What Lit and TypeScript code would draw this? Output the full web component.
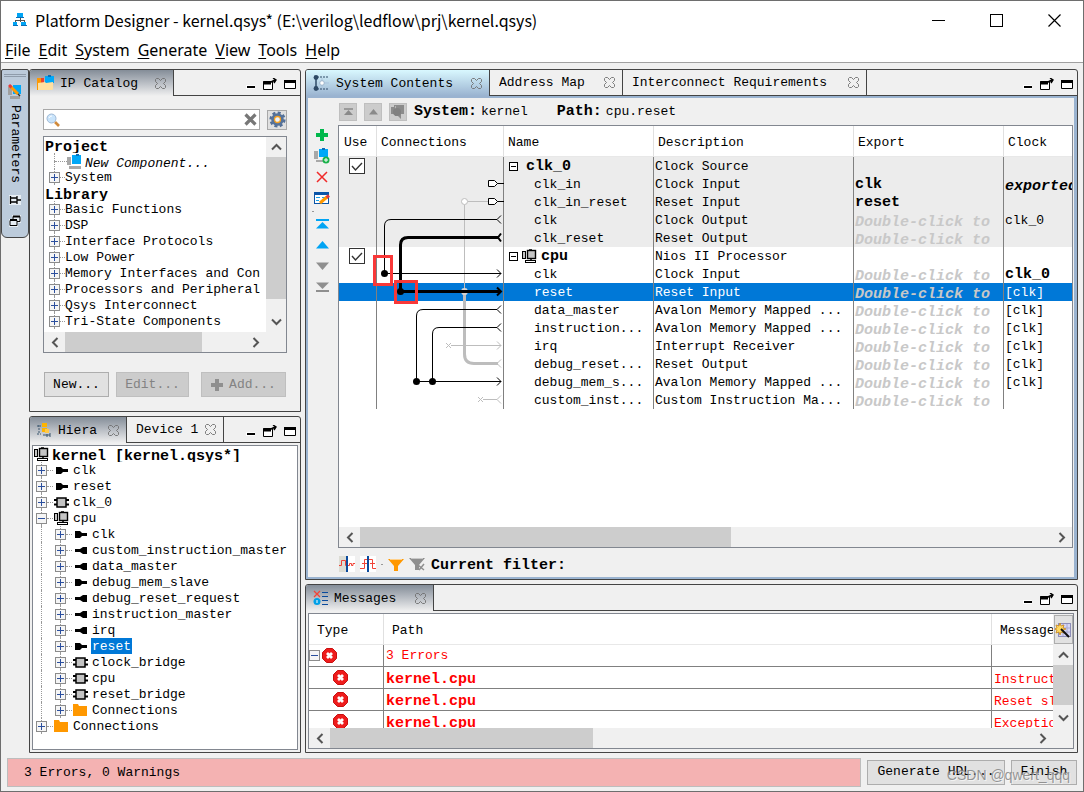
import { LitElement, html, css, svg, nothing, TemplateResult } from "lit";
import { customElement, state } from "lit/decorators.js";
import { classMap } from "lit/directives/class-map.js";

type Port = {
  name: string;
  desc: string;
  exp?: string;
  hint?: boolean;
  clock?: string;
  clockStyle?: string;
  root?: "plain" | "cpu";
  shaded?: boolean;
};

const HINT = "Double-click to";

const PORTS: Port[] = [
  { name: "clk_0", desc: "Clock Source", root: "plain", shaded: true },
  { name: "clk_in", desc: "Clock Input", exp: "clk", clock: "exported", clockStyle: "hint dark", shaded: true },
  { name: "clk_in_reset", desc: "Reset Input", exp: "reset", shaded: true },
  { name: "clk", desc: "Clock Output", hint: true, clock: "clk_0", shaded: true },
  { name: "clk_reset", desc: "Reset Output", hint: true, shaded: true },
  { name: "cpu", desc: "Nios II Processor", root: "cpu" },
  { name: "clk", desc: "Clock Input", hint: true, clock: "clk_0", clockStyle: "bold" },
  { name: "reset", desc: "Reset Input", hint: true, clock: "[clk]" },
  { name: "data_master", desc: "Avalon Memory Mapped ...", hint: true, clock: "[clk]" },
  { name: "instruction...", desc: "Avalon Memory Mapped ...", hint: true, clock: "[clk]" },
  { name: "irq", desc: "Interrupt Receiver", hint: true, clock: "[clk]" },
  { name: "debug_reset...", desc: "Reset Output", hint: true, clock: "[clk]" },
  { name: "debug_mem_s...", desc: "Avalon Memory Mapped ...", hint: true, clock: "[clk]" },
  { name: "custom_inst...", desc: "Custom Instruction Ma...", hint: true },
];

const LIBRARY = [
  "Basic Functions",
  "DSP",
  "Interface Protocols",
  "Low Power",
  "Memory Interfaces and Con",
  "Processors and Peripheral",
  "Qsys Interconnect",
  "Tri-State Components",
];

type Node = { label: string; icon: string; deep?: boolean; open?: boolean };
const HIERARCHY: Node[] = [
  { label: "clk", icon: "in" },
  { label: "reset", icon: "in" },
  { label: "clk_0", icon: "chip" },
  { label: "cpu", icon: "cpu", open: true },
  { label: "clk", icon: "in", deep: true },
  { label: "custom_instruction_master", icon: "out", deep: true },
  { label: "data_master", icon: "out", deep: true },
  { label: "debug_mem_slave", icon: "in", deep: true },
  { label: "debug_reset_request", icon: "out", deep: true },
  { label: "instruction_master", icon: "out", deep: true },
  { label: "irq", icon: "out", deep: true },
  { label: "reset", icon: "in", deep: true },
  { label: "clock_bridge", icon: "chip", deep: true },
  { label: "cpu", icon: "chip", deep: true },
  { label: "reset_bridge", icon: "chip", deep: true },
  { label: "Connections", icon: "folder", deep: true },
  { label: "Connections", icon: "folder" },
];

const ic = (w: number, h: number, body: unknown) =>
  html`<svg class="ic" width=${w} height=${h} viewBox="0 0 ${w} ${h}" aria-hidden="true">${body}</svg>`;

const icons: Record<string, TemplateResult> = {
  app: ic(14, 14, svg`<g shape-rendering="crispEdges"><path d="M7 5v4M2.500 10V7.500h9V10" fill="none" stroke="#555"/><rect x="4" y="0" width="6" height="4" fill="#00a4f4"/><rect x="3" y="4" width="8" height="1" fill="#0a6fb8"/><rect x="0" y="9" width="4" height="3" fill="#00a4f4"/><rect x="0" y="12" width="5" height="1" fill="#0a6fb8"/><rect x="8" y="9" width="5" height="3" fill="#00a4f4"/><rect x="8" y="12" width="6" height="1" fill="#0a6fb8"/></g>`),
  catalog: ic(17, 16, svg`<rect x="2" y="3" width="5" height="6" fill="#e8432e"/><rect x="8" y="1" width="9" height="7" fill="#00a8f8"/><path d="M11 0h3v2h-3z" fill="#0a6fb8"/><path d="M0 3h4v12H0z" fill="#ff9800"/><path d="M1 8l7-1 1 1 7-1v7l-1 1H1z" fill="#ffe0a0"/>`),
  param: ic(14, 16, svg`<rect x="5" y="1" width="8" height="9" fill="#00a8f8"/><path d="M0 3h4v8H0zM2 12h10v3H2z" fill="#a0a0a0"/><path d="M2 2l8 8" stroke="#ff9800" stroke-width="3"/><path d="M1 1l2.500 2.500" stroke="#e83a3a" stroke-width="3"/><path d="M10 10l2 2" stroke="#333" stroke-width="1.500"/>`),
  pin: ic(12, 10, svg`<path d="M0 0h12v10H0z" fill="#e6edf4"/><path d="M1.500 1v8M1 3h7M1 7h7M8 1v8M8 5h4" fill="none" stroke="#000" stroke-width="1.300"/>`),
  restore: ic(12, 12, svg`<path d="M3 0h9v8H9v4H0V4h3z" fill="#e6edf4"/><path d="M4 4V1.500h7v5H8" fill="none" stroke="#000"/><path d="M1 5.500h7v5H1z" fill="none" stroke="#000"/><path d="M1 5h7M4 1.500h7" stroke="#000" stroke-width="2"/>`),
  hier: ic(15, 15, svg`<path d="M2 2v9M0 3h4M0 11h4" stroke="#38546c" fill="none" stroke-dasharray="2 1"/><rect x="5" y="0" width="5" height="4" fill="#ffb400"/><rect x="5" y="5" width="5" height="4" fill="#ffb400"/><rect x="8" y="6" width="4" height="4" fill="#ffc94a"/><path d="M6 12h7M13 10v4M10 11v3" stroke="#38546c"/>`),
  sys: ic(17, 16, svg`<g fill="none"><path d="M3 2v12" stroke="#2e4a66" stroke-width="1.500"/><path d="M4 2h12M4 14h12" stroke="#2e4a66" stroke-dasharray="2 1"/><path d="M9 3v10M6 8h10" stroke="#a9c3dc"/></g><circle cx="3" cy="2.500" r="2.400" fill="#2e4a66"/><circle cx="3" cy="13.500" r="2.400" fill="#2e4a66"/><circle cx="9" cy="8" r="2.300" fill="#fff" stroke="#9db5cc"/>`),
  msg: ic(15, 16, svg`<path d="M1 1l6 6M7 1L1 7" stroke="#f44336" stroke-width="1.300"/><circle cx="4" cy="11.500" r="3.500" fill="#00a0e8"/><path d="M4 10v3" stroke="#fff"/><path d="M9 2.500h6M9 6.500h6M9 10.500h6M9 14.500h6" stroke="#0a4a9c"/>`),
  close: ic(11, 11, svg`<path d="M.500 1.500l1-1h2l2 2 2-2h2l1 1v2l-2 2 2 2v2l-1 1h-2l-2-2-2 2h-2l-1-1v-2l2-2-2-2z" fill="none" stroke="#6e6e6e" stroke-width=".9"/>`),
  min: ic(9, 13, svg`<rect x="0" y="7" width="9" height="4" fill="#fff"/><rect x="1" y="8" width="8" height="2" fill="#000"/>`),
  pop: ic(15, 13, svg`<path d="M1.500 3.500h9v8h-9z" fill="#fff" stroke="#000"/><path d="M1 5h8" stroke="#000" stroke-width="3"/><path d="M8 4.500l5-2.500M11 0l3 2-2 3" fill="none" stroke="#000" stroke-width="1.400"/>`),
  max: ic(13, 13, svg`<path d="M.500 2.500h11v8H.500z" fill="#fff" stroke="#000"/><path d="M0 3.500h12" stroke="#000" stroke-width="3"/>`),
  search: ic(14, 14, svg`<path d="M9 9l4 4" stroke="#d08a3c" stroke-width="2.600"/><circle cx="5.500" cy="5.500" r="4.500" fill="#c9e4fb" stroke="#9fb8d4"/><path d="M3 5a3 3 0 0 1 3-2" stroke="#fff" fill="none"/>`),
  clear: ic(13, 13, svg`<path d="M1.500 1.500l10 10M11.500 1.500l-10 10" stroke="#777" stroke-width="3.200"/>`),
  gear: ic(17, 17, svg`<circle cx="8.500" cy="8.500" r="6.800" fill="none" stroke="#536f96" stroke-width="2.600" stroke-dasharray="3 2.340"/><circle cx="8.500" cy="8.500" r="4.600" fill="#dfe8f4" stroke="#56739b" stroke-width="3.400"/><circle cx="8.500" cy="8.500" r="3" fill="#eef4fb" stroke="#f5a021" stroke-width="1.300"/>`),
  comp: ic(15, 15, svg`<rect x="5" y="1" width="9" height="9" fill="#00a8f8"/><path d="M0 3h4v8H0zM2 12h12v3H2z" fill="#a8a8a8"/><path d="M9 0h3v2H9z" fill="#0a6fb8"/>`),
  compAdd: ic(16, 16, svg`<rect x="5" y="1" width="9" height="8" fill="#00a8f8"/><path d="M0 3h4v8H0zM2 12h8v2H2z" fill="#a8a8a8"/><path d="M8 0h3v2H8z" fill="#0a6fb8"/><circle cx="12" cy="12" r="3.500" fill="#19b24a"/><path d="M12 10v4M10 12h4" stroke="#fff"/>`),
  compGray: ic(16, 16, svg`<path d="M1 3h3V1h10v9h-3v5l-3-3H5v-2H1z" fill="#8b8b8b"/><path d="M5.500 2v6" stroke="#b4b4b4"/><circle cx="7" cy="8" r="4" fill="#808080"/>`),
  add: ic(12, 12, svg`<path d="M4 0h4v4h4v4H8v4H4V8H0V4h4z" fill="#00b84c"/>`),
  addGray: ic(12, 12, svg`<path d="M4 0h4v4h4v4H8v4H4V8H0V4h4z" fill="#8f8f8f"/>`),
  del: ic(12, 12, svg`<path d="M1 1l10 10M11 1L1 11" stroke="#f02a2a" stroke-width="1.500"/>`),
  edit: ic(16, 14, svg`<rect x=".500" y="1.500" width="14" height="11" fill="#fff" stroke="#0a55a8"/><path d="M0 2.500h15" stroke="#0a55a8" stroke-width="3"/><path d="M2 6.500h4M2 9.500h3M8 6.500h3" stroke="#18a0e8"/><path d="M6 12l7-6" stroke="#ff9800" stroke-width="3"/><path d="M12.500 6.500L15 4.500" stroke="#e83a3a" stroke-width="3"/>`),
  top: ic(13, 10, svg`<path d="M0 1h13" stroke="#00a4f4" stroke-width="2"/><path d="M6.500 3L13 9.500H0z" fill="#00a4f4"/>`),
  up: ic(13, 8, svg`<path d="M6.500 0L13 7.500H0z" fill="#00a4f4"/>`),
  down: ic(13, 8, svg`<path d="M6.500 8L13 .500H0z" fill="#8f8f8f"/>`),
  bottom: ic(13, 10, svg`<path d="M0 9h13" stroke="#8f8f8f" stroke-width="2"/><path d="M6.500 7L13 .500H0z" fill="#8f8f8f"/>`),
  topGray: ic(9, 8, svg`<path d="M0 1h9" stroke="#8a8a8a" stroke-width="1.500"/><path d="M4.500 2L9 7H0z" fill="#8a8a8a"/>`),
  upGray: ic(9, 6, svg`<path d="M4.500 0L9 5.500H0z" fill="#8a8a8a"/>`),
  in: ic(14, 9, svg`<path d="M1 1h5l2 2h5v3H8L6 8H1z" fill="#000"/>`),
  out: ic(14, 9, svg`<path d="M13 1H9L6 3H1v3h5l3 2h4z" fill="#000"/>`),
  chip: ic(15, 11, svg`<path d="M0 3h15M0 7.500h15" stroke="#000" stroke-width="2"/><rect x="3" y="1" width="9" height="9" fill="#c4c4c4" stroke="#000" stroke-width="1.500"/>`),
  cpu: ic(15, 14, svg`<g stroke="#000"><rect x=".500" y="2.500" width="3" height="7" fill="#c4c4c4"/><rect x="5.500" y="1.500" width="8" height="8" fill="#c4c4c4" stroke-width="1.400"/><path d="M9 10v2M7 0h3" fill="none" stroke-width="1.500"/><rect x="3.500" y="11.500" width="10" height="2" fill="#fff"/></g>`),
  folder: ic(15, 12, svg`<path d="M0 0h5l1 2h8v10H0z" fill="#ff9800"/>`),
  err: ic(15, 15, svg`<path d="M4.500.500h6l4 4v6l-4 4h-6l-4-4v-6z" fill="#ee1c1c" stroke="#c81010"/><path d="M5 5l5 5M10 5l-5 5" stroke="#fff" stroke-width="2.800"/>`),
  wave1: ic(16, 16, svg`<rect width="7" height="16" fill="#dcdcd4"/><rect x="7" width="9" height="16" fill="#fff"/><path d="M0 9.500h2.500v-5h4v5H9M9 9.500h1.500v-2h2v2h1.500v-2h2" fill="none" stroke="#f04438"/><path d="M8 0v16" stroke="#0a4a9c" stroke-width="2"/>`),
  wave2: ic(16, 16, svg`<rect width="16" height="16" fill="#fff"/><path d="M0 12.500h4.500v-9H7M9 3.500h3.500v9H16M2 7.500h5M10 7.500h5" fill="none" stroke="#f04438"/><path d="M8 0v16" stroke="#0a4a9c" stroke-width="2"/>`),
  funnel: ic(16, 13, svg`<path d="M0 1h16l-6 7v5H6V8z" fill="#ff9800"/><path d="M2 1.500h12" stroke="#ffd08a"/>`),
  funnelGray: ic(17, 14, svg`<path d="M0 1h16l-6 7v5H6V8z" fill="#8f8f8f"/><path d="M2 1.500h12" stroke="#c8c8c8"/><path d="M9 8l6 5M15 7l-5 6" stroke="#8f8f8f" stroke-width="1.500"/>`),
  wizard: ic(16, 16, svg`<rect x="3.500" y="1.500" width="12" height="13" fill="#d5d5f4" stroke="#8e8eb8"/><path d="M4 6h11M4 10h11M8 2v12M12 2v12" stroke="#a8a8d0"/><path d="M5 1l1 3 3-1-1 3 3 1-3 1 1 3-3-1-1 3-1-3-3 1 1-3-3-1 3-1-1-3 3 1z" fill="#ffd860" stroke="#c8881c" stroke-width=".8"/><path d="M6 7l8 8" stroke="#111" stroke-width="2"/>`),
  plus: ic(11, 11, svg`<rect x=".500" y=".500" width="10" height="10" fill="#f5f5f5" stroke="#8c8c8c"/><path d="M2 5.500h7M5.500 2v7" stroke="#2b4f9e"/>`),
  minus: ic(11, 11, svg`<rect x=".500" y=".500" width="10" height="10" fill="#f5f5f5" stroke="#8c8c8c"/><path d="M2 5.500h7" stroke="#2b4f9e"/>`),
  fold: ic(9, 9, svg`<rect x=".500" y=".500" width="8" height="8" fill="#fff" stroke="#000"/><path d="M2 4.500h5" stroke="#000"/>`),
  chevL: ic(8, 11, svg`<path d="M6.500 1L2 5.500 6.500 10" fill="none" stroke="#555" stroke-width="2"/>`),
  chevR: ic(8, 11, svg`<path d="M1.500 1L6 5.500 1.500 10" fill="none" stroke="#555" stroke-width="2"/>`),
  chevU: ic(11, 8, svg`<path d="M1 6.500L5.500 2 10 6.500" fill="none" stroke="#555" stroke-width="2"/>`),
  chevD: ic(11, 8, svg`<path d="M1 1.500L5.500 6 10 1.500" fill="none" stroke="#555" stroke-width="2"/>`),
};

/* Wiring between module ports, one lane per bus. */
const wiring = html`
  <svg class="wires" width="165" height="252" viewBox="339 157 165 252" aria-hidden="true">
    <g fill="none" stroke="#bdbdbd">
      <path d="M464.500 205V290M468 201.500H488" />
      <path d="M464.500 295V354Q464.500 363.500 474 363.500H498" stroke-width="3" />
      <path d="M451 345.500H501M446 343l5 5M451 343l-5 5M497 341.500l4 4-4 4" />
      <path d="M483 399.500H497M478 397l5 5M483 397l-5 5M501 395.500l-4 4 4 4M501 359.500l-4 4 4 4" />
      <circle cx="464.500" cy="201.500" r="3" fill="#fff" />
    </g>
    <g fill="none" stroke="#000">
      <path d="M497 183.500H504M497 201.500H504" />
      <path d="M488.500 180.500h6l3 3-3 3h-6zM488.500 198.500h6l3 3-3 3h-6z" fill="#fff" />
      <path d="M497 219.500H391Q384.500 219.500 384.500 226V273.500H501" />
      <path d="M501 215.500l-4 4 4 4M497 269.500l4 4-4 4" />
      <path d="M498 237.500H408Q400.500 237.500 400.500 245V291.500H501" stroke-width="3" />
      <path d="M501 233.500l-3 4 3 4M497 287.500l4 4-4 4" stroke-width="2" />
      <path d="M497 309.500H423Q416.500 309.500 416.500 316V381.500H501" />
      <path d="M497 327.500H439Q432.500 327.500 432.500 334V381.500" />
      <path d="M501 305.500l-4 4 4 4M501 323.500l-4 4 4 4M497 377.500l4 4-4 4" />
    </g>
    <path d="M461.500 290q0-2 3-2t3 2zM461.500 293q0 2 3 2t3-2z" fill="#d4d4d4" />
    <circle cx="384.500" cy="273.500" r="3.500" />
    <circle cx="400.500" cy="291.500" r="3.500" />
    <circle cx="416.500" cy="381.500" r="3.500" />
    <circle cx="432.500" cy="381.500" r="3.500" />
    <g fill="none" stroke="#f93838" stroke-width="3">
      <rect x="374.500" y="256.500" width="17" height="28" />
      <rect x="395.500" y="281.500" width="21" height="21" />
    </g>
  </svg>
`;

@customElement("app-root")
export class AppRoot extends LitElement {
  @state() private selected = 7;

  static styles = css`
    :host {
      display: block;
      color: #000;
      font: 13px/16px "Liberation Mono", monospace;
    }
    * { box-sizing: border-box; }
    button, input { font: inherit; color: inherit; }
    button { margin: 0; padding: 0; border: 0; background: none; white-space: nowrap; }
    svg { display: block; flex: none; }
    .bold { font-weight: bold; font-size: 15px; }
    .app {
      display: grid;
      grid-template-rows: 38px 24px minmax(0, 1fr) 38px;
      height: 100vh;
      min-height: 560px;
      background: #f0f0f0;
      border: 1px solid #6e6e6e;
      overflow: hidden;
    }
    .titlebar {
      display: flex;
      align-items: center;
      background: #fff;
      padding-left: 12px;
      font: 16px/22px "Noto Sans CJK SC", "Noto Sans", sans-serif;
    }
    .titlebar h1 { flex: 1; margin: 0 0 0 8px; font: inherit; }
    .sysbtn { width: 58px; height: 36px; display: grid; place-items: center; }
    .menubar {
      display: flex;
      gap: 8px;
      padding: 0 4px;
      background: #fff;
      border-bottom: 1px solid #a0a0a0;
      font: 16px/23px "Noto Sans", sans-serif;
    }
    .menubar u { text-underline-offset: 2px; }
    .body { display: flex; padding: 6px 5px 0 0; min-height: 0; }

    .dock {
      width: 28px;
      height: 169px;
      flex: none;
      display: flex;
      flex-direction: column;
      align-items: center;
      background: #bccbdb;
      border: 1px solid #444;
      border-radius: 2px 2px 6px 6px;
      padding-top: 4px;
    }
    .grip { width: 22px; height: 3px; border: 1px solid #8f9cab; border-width: 1px 0; margin-bottom: 7px; }
    .dock button { display: flex; flex-direction: column; align-items: center; gap: 5px; margin-bottom: 12px; }
    .dock .vertical { writing-mode: vertical-rl; }
    .dock .small { margin-bottom: 10px; }

    .left { flex: none; width: 272px; display: grid; grid-template-rows: 343fr 337fr; gap: 4px; }
    .right { flex: 1; min-width: 0; margin-left: 4px; display: grid; grid-template-rows: 511fr 169fr; gap: 4px; }
    .panel {
      display: flex;
      flex-direction: column;
      min-height: 0;
      min-width: 0;
      border: 1px solid #444;
      border-radius: 3px 3px 0 0;
      overflow: hidden;
    }
    .tabs { display: flex; height: 26px; flex: none; }
    .tab {
      display: flex;
      align-items: center;
      flex: none;
      padding: 0 7px 0 9px;
      border-right: 1px solid #444;
      border-bottom: 1px solid #444;
    }
    .tab .name { flex: 1; overflow: hidden; text-align: left; padding-top: 1px; }
    .tab .ic { margin-right: 6px; }
    .tab .x .ic { margin: 0; }
    .tab.active { border-bottom: 0; padding-left: 7px; background: linear-gradient(#848d98, #b4b9c0 45%, #f0f0f0); }
    .tab.focus { background: linear-gradient(#d9f8ff, #9ab3d0); }
    .w184 { width: 184px; } .w133 { width: 133px; } .w244 { width: 244px; }
    .w144 { width: 144px; } .w128 { width: 128px; } .w97 { width: 97px; }
    .rest {
      flex: 1;
      display: flex;
      align-items: center;
      justify-content: flex-end;
      gap: 7px;
      padding: 3px 3px 0 0;
      border-bottom: 1px solid #444;
    }

    .catalog { flex: 1; min-height: 0; display: flex; flex-direction: column; padding: 13px 13px 14px; }
    .searchrow { display: flex; align-items: center; justify-content: space-between; margin-bottom: 6px; }
    .field { display: flex; align-items: center; width: 217px; height: 21px; padding: 0 2px; background: #fff; border: 1px solid #a8a8a8; }
    .field input { flex: 1; min-width: 0; border: 0; outline: 0; padding: 0 4px; background: none; }
    .gear { width: 20px; height: 20px; border: 1px solid #a8a8a8; background: #e0e0e0; display: grid; place-items: center; }
    .scrollbox {
      flex: 1;
      min-height: 0;
      display: grid;
      grid-template: minmax(0, 1fr) 20px / minmax(0, 1fr) 20px;
      border: 1px solid #828790;
      background: #fff;
    }
    .view { overflow: hidden; }
    .vbar, .hbar { background: #f0f0f0; display: flex; align-items: center; }
    .vbar { flex-direction: column; }
    .vbar .track, .hbar .track { flex: 1; display: flex; align-self: stretch; min-height: 0; }
    .vbar .track { flex-direction: column; }
    .thumb { background: #cdcdcd; }
    .arrow { width: 21px; height: 20px; flex: none; display: grid; place-items: center; }
    .corner { background: #f0f0f0; }

    ul { list-style: none; margin: 0; padding: 0; }
    .row { display: flex; align-items: center; height: 16px; overflow: hidden; white-space: pre; }
    .row .bold, .row i { line-height: 21px; height: 16px; overflow: hidden; }
    .cat .row { padding-left: 5px; }
    .cat .head { padding-left: 1px; }
    .text { padding-top: 2px; }
    .dots { width: 5px; border-top: 1px dotted #999; }
    .stem { align-self: stretch; width: 11px; display: flex; flex-direction: column; align-items: center; flex: none; }
    .stem::before, .stem::after { content: ""; flex: 1; border-left: 1px dotted #999; }
    .dots.long { width: 12px; margin-left: -5px; }
    .row i { padding-left: 3px; }

    .actions { display: flex; margin: 19px 0 0 1px; gap: 7px; }
    .btn { height: 25px; border: 1px solid #adadad; background: #e1e1e1; display: flex; align-items: center; justify-content: center; gap: 6px; }
    .btn:disabled { background: #ccc; border-color: #bfbfbf; color: #838383; }
    .bnew { width: 65px; } .bedit { width: 73px; } .badd { width: 85px; margin-left: 5px; }

    .hbox { flex: 1; min-height: 0; margin: 2px; border: 1px solid #828790; background: #fff; overflow: hidden; }
    .hbox .row { padding-left: 3px; }
    .hbox .row.top { padding-left: 1px; gap: 3px; }
    .hbox .row.deep { padding-left: 8px; }
    .hbox .dots { width: 6px; margin-right: 1px; }
    .slot { width: 15px; flex: none; display: grid; place-items: center; }
    .lab { margin-left: 3px; padding: 2px 1px 0; line-height: 16px; }
    .trunk { align-self: stretch; border-left: 1px dotted #999; margin-right: 13px; }
    .lab.sel { background: #0078d7; color: #fff; }

    .main { flex: 1; min-height: 0; display: grid; grid-template: 27px minmax(0, 1fr) 29px / 30px minmax(0, 1fr); border: 2px solid #9ab3d0; border-right-width: 3px; padding-right: 1px; }
    .pathbar { grid-column: 1 / -1; display: flex; align-items: center; gap: 7px; padding-left: 31px; }
    .sq { width: 18px; height: 18px; background: #ccc; border: 1px solid #bfbfbf; display: grid; place-items: center; }
    .pathbar .bold { margin-right: -3px; }
    .pathbar .second { margin-left: 22px; }
    .tools { display: flex; flex-direction: column; align-items: center; padding-right: 2px; }
    .tools button { height: 20px; display: grid; place-items: center; margin-bottom: 1px; }
    .tools .sep { width: 2px; height: 1px; background: #999; align-self: flex-start; margin: 2px 0 2px 4px; }
    .grid { display: grid; grid-template-rows: minmax(0, 1fr) 20px; border: 1px solid #828790; background: #fff; }
    .gview { position: relative; overflow: hidden; }
    .wires { position: absolute; left: 0; top: 31px; }
    table { border-collapse: separate; border-spacing: 0; table-layout: fixed; width: 100%; }
    th { font-weight: normal; text-align: left; white-space: nowrap; overflow: hidden; padding: 3px 0 0 4px; height: 31px; background: #fff; border-bottom: 1px solid #e8e8e8; border-left: 1px solid #e0e0e0; }
    th:first-child, td:first-child { border-left: 0; }
    th:first-child { padding-left: 5px; }
    td { padding: 0; height: 18px; white-space: nowrap; overflow: hidden; border-left: 1px solid #808080; }
    td > div { height: 18px; line-height: 19px; overflow: hidden; padding-left: 1px; }
    .shaded td { background: #ececec; }
    .selected td { background: #0078d7; color: #fff; }
    td > .pname { padding-left: 30px; }
    td > .proot { display: flex; align-items: center; gap: 4px; padding-left: 5px; }
    .proot .bold { margin-left: 4px; }
    .proot .ic + .ic + .bold { margin-left: 0; }
    .hint { font: italic bold 15px/24px "Liberation Mono", monospace; color: #c8c8c8; }
    td > .hint { line-height: 24px; }
    .dark { color: #000; }
    td > .use { display: grid; place-items: center; padding: 0 2px 0 0; }
    .use input {
      appearance: none;
      width: 16px;
      height: 16px;
      margin: 0;
      border: 1px solid #333;
      background: #fff url("data:image/svg+xml,%3Csvg xmlns='http://www.w3.org/2000/svg' viewBox='0 0 14 14'%3E%3Cpath d='M2 7l3.500 4L12 4' fill='none' stroke='%23333' stroke-width='1.400'/%3E%3C/svg%3E");
    }
    .filter { grid-column: 2; display: flex; align-items: center; gap: 5px; padding: 3px 0 0 1px; }
    .filter .bold { margin: 4px 0 0 0; }
    .filter .dot { width: 2px; height: 1px; background: #999; }

    .msgs { flex: 1; min-height: 0; margin: 2px 3px 3px 2px; display: grid; grid-template: minmax(0, 1fr) 20px / minmax(0, 1fr) 20px; border: 1px solid #828790; background: #fff; }
    .msgs th { height: 31px; padding-left: 8px; }
    .msgs td { height: 22px; border-bottom: 1px solid #808080; color: #ff0000; }
    .msgs td > div { height: 21px; line-height: 21px; padding-left: 2px; }
    .msgs td > .low { line-height: 26px; }
    .msgs td > .mtype { display: flex; align-items: center; padding-left: 0; gap: 2px; }
    .msgs td > .mchild { padding-left: 24px; }
    .msgs .vbar { padding-top: 1px; }
    .cfg { width: 19px; height: 29px; border: 1px solid #adadad; background: #e1e1e1; display: grid; place-items: center; margin-bottom: 1px; flex: none; }

    .status { display: flex; align-items: center; gap: 6px; padding: 0 6px; position: relative; }
    .state { flex: 1; height: 29px; line-height: 28px; padding-left: 16px; margin: 0; background: #f4b2b2; border: 1px solid #bdbdbd; }
    .bgen { width: 138px; } .bfin { width: 66px; }
    .mark { position: absolute; right: 13px; top: 13px; font: 14px/18px "Liberation Sans", sans-serif; color: rgba(120, 120, 120, 0.75); text-shadow: 1px 1px 0 rgba(255, 255, 255, 0.6); pointer-events: none; }
  `;

  private windowButtons() {
    return html`<div class="rest">
      <button aria-label="Minimize">${icons.min}</button>
      <button aria-label="Detach">${icons.pop}</button>
      <button aria-label="Maximize">${icons.max}</button>
    </div>`;
  }

  private tab(name: string, width: string, icon?: TemplateResult, focus = false) {
    return html`<div class="tab ${width} ${icon ? "active" : ""} ${focus ? "focus" : ""}">
      ${icon ?? nothing}
      <button class="name">${name}</button>
      <button class="x" aria-label="Close ${name}">${icons.close}</button>
    </div>`;
  }

  private hbar(size: number, rest: number) {
    return html`<div class="hbar">
      <button class="arrow" aria-label="Scroll left">${icons.chevL}</button>
      <div class="track">
        <div class="thumb" style="flex:${size}"></div>
        <div style="flex:${rest}"></div>
      </div>
      <button class="arrow" aria-label="Scroll right">${icons.chevR}</button>
    </div>`;
  }

  private vbar(size: number, rest: number, top: unknown = nothing) {
    return html`<div class="vbar">
      ${top}
      <button class="arrow" aria-label="Scroll up">${icons.chevU}</button>
      <div class="track">
        <div class="thumb" style="flex:${size}"></div>
        <div style="flex:${rest}"></div>
      </div>
      <button class="arrow" aria-label="Scroll down">${icons.chevD}</button>
    </div>`;
  }

  private leaf(label: string) {
    return html`<li class="row"><span class="stem">${icons.plus}</span><span class="dots"></span><span class="text">${label}</span></li>`;
  }

  private catalog() {
    return html`<section class="panel">
      <div class="tabs">${this.tab("IP Catalog", "w144", icons.catalog)}${this.windowButtons()}</div>
      <div class="catalog">
        <div class="searchrow">
          <label class="field">
            ${icons.search}<input type="text" aria-label="Search IP" />
            <button aria-label="Clear">${icons.clear}</button>
          </label>
          <button class="gear" aria-label="Settings">${icons.gear}</button>
        </div>
        <div class="scrollbox">
          <ul class="view cat">
            <li class="row head"><span class="bold">Project</span></li>
            <li class="row"><span class="stem"></span><span class="dots long"></span>${icons.comp}<i>New Component...</i></li>
            ${this.leaf("System")}
            <li class="row head"><span class="bold">Library</span></li>
            ${LIBRARY.map((l) => this.leaf(l))}
          </ul>
          ${this.vbar(140, 13)}
          ${this.hbar(136, 43)}
          <div class="corner"></div>
        </div>
        <div class="actions">
          <button class="btn bnew">New...</button>
          <button class="btn bedit" disabled>Edit...</button>
          <button class="btn badd" disabled>${icons.addGray}Add...</button>
        </div>
      </div>
    </section>`;
  }

  private hierarchy() {
    return html`<section class="panel">
      <div class="tabs">
        ${this.tab("Hiera", "w97", icons.hier)}${this.tab("Device 1", "w97")}${this.windowButtons()}
      </div>
      <div class="hbox">
        <ul>
          <li class="row top">${icons.cpu}<span class="bold">kernel [kernel.qsys*]</span></li>
          ${HIERARCHY.map(
            (n, i) => html`<li class=${classMap({ row: true, deep: !!n.deep })}>
              ${n.deep ? html`<span class="trunk"></span>` : nothing}<span class="stem">${n.open ? icons.minus : icons.plus}</span><span class="dots"></span><span class="slot">${icons[n.icon]}</span><span class="lab ${i === 11 ? "sel" : ""}">${n.label}</span>
            </li>`
          )}
        </ul>
      </div>
    </section>`;
  }

  private portRow(p: Port, i: number) {
    return html`<tr
      class=${classMap({ shaded: !!p.shaded, selected: i === this.selected })}
      @click=${() => (this.selected = i)}
    >
      <td>${p.root ? html`<div class="use"><input type="checkbox" checked aria-label="Use ${p.name}" /></div>` : nothing}</td>
      <td></td>
      <td>
        ${p.root
          ? html`<div class="proot">${icons.fold}${p.root === "cpu" ? icons.cpu : nothing}<span class="bold">${p.name}</span></div>`
          : html`<div class="pname">${p.name}</div>`}
      </td>
      <td><div>${p.desc}</div></td>
      <td>${p.hint ? html`<div class="hint">${HINT}</div>` : html`<div class="bold">${p.exp ?? ""}</div>`}</td>
      <td><div class=${p.clockStyle ?? ""}>${p.clock ?? ""}</div></td>
    </tr>`;
  }

  private system() {
    return html`<section class="panel">
      <div class="tabs">
        ${this.tab("System Contents", "w184", icons.sys, true)}
        ${this.tab("Address Map", "w133")}
        ${this.tab("Interconnect Requirements", "w244")}
        ${this.windowButtons()}
      </div>
      <div class="main">
        <div class="pathbar">
          <button class="sq" disabled aria-label="To top">${icons.topGray}</button>
          <button class="sq" disabled aria-label="Up one level">${icons.upGray}</button>
          <button class="sq" disabled aria-label="Drill in">${icons.compGray}</button>
          <span class="bold">System:</span><span>kernel</span>
          <span class="bold second">Path:</span><span>cpu.reset</span>
        </div>
        <div class="tools">
          ${(["add", "compAdd", "del", "edit"] as const).map((k) => html`<button aria-label=${k}>${icons[k]}</button>`)}
          <div class="sep"></div>
          ${(["top", "up", "down", "bottom"] as const).map((k) => html`<button aria-label=${k}>${icons[k]}</button>`)}
        </div>
        <div class="grid">
          <div class="gview">
            <table>
              <colgroup>
                <col style="width:37px" /><col style="width:127px" /><col style="width:150px" /><col style="width:200px" /><col style="width:150px" /><col />
              </colgroup>
              <thead>
                <tr><th>Use</th><th>Connections</th><th>Name</th><th>Description</th><th>Export</th><th>Clock</th></tr>
              </thead>
              <tbody>${PORTS.map((p, i) => this.portRow(p, i))}</tbody>
            </table>
            ${wiring}
          </div>
          ${this.hbar(371, 320)}
        </div>
        <div class="filter">
          ${icons.wave1}${icons.wave2}<span class="dot"></span>${icons.funnel}${icons.funnelGray}
          <span class="bold">Current filter:</span>
        </div>
      </div>
    </section>`;
  }

  private messages() {
    const rows = ["Instruction slave", "Reset slave", "Exception slave"];
    return html`<section class="panel">
      <div class="tabs">${this.tab("Messages", "w128", icons.msg)}${this.windowButtons()}</div>
      <div class="msgs">
        <div class="view">
          <table>
            <colgroup><col style="width:74px" /><col /><col style="width:62px" /></colgroup>
            <thead><tr><th>Type</th><th>Path</th><th>Message</th></tr></thead>
            <tbody>
              <tr><td><div class="mtype">${icons.minus}${icons.err}</div></td><td><div>3 Errors</div></td><td></td></tr>
              ${rows.map(
                (r) => html`<tr>
                  <td><div class="mtype mchild">${icons.err}</div></td>
                  <td><div class="low bold">kernel.cpu</div></td>
                  <td><div class="low">${r}</div></td>
                </tr>`
              )}
            </tbody>
          </table>
        </div>
        ${this.vbar(38, 3, html`<button class="cfg" aria-label="Configure columns">${icons.wizard}</button>`)}
        ${this.hbar(263, 438)}
        <div class="corner"></div>
      </div>
    </section>`;
  }

  render() {
    const menus = ["File", "Edit", "System", "Generate", "View", "Tools", "Help"];
    return html`<div class="app">
      <header class="titlebar">
        ${icons.app}
        <h1>Platform Designer - kernel.qsys* (E:\\verilog\\ledflow\\prj\\kernel.qsys)</h1>
        <button class="sysbtn" aria-label="Minimize window">${ic(13, 13, svg`<path d="M0 6.500h13" stroke="#000"/>`)}</button>
        <button class="sysbtn" aria-label="Maximize window">${ic(13, 13, svg`<rect x=".500" y=".500" width="12" height="12" fill="none" stroke="#000"/>`)}</button>
        <button class="sysbtn" aria-label="Close window">${ic(13, 13, svg`<path d="M.500.500l12 12M12.500.500l-12 12" stroke="#000" stroke-width="1.200"/>`)}</button>
      </header>
      <nav class="menubar">
        ${menus.map((m) => html`<button><u>${m[0]}</u>${m.slice(1)}</button>`)}
      </nav>
      <div class="body">
        <aside class="dock">
          <div class="grip"></div>
          <button>${icons.param}<span class="vertical">Parameters</span></button>
          <button class="small" aria-label="Pin">${icons.pin}</button>
          <button class="small" aria-label="Restore">${icons.restore}</button>
        </aside>
        <div class="left">${this.catalog()}${this.hierarchy()}</div>
        <main class="right">${this.system()}${this.messages()}</main>
      </div>
      <footer class="status">
        <p class="state">3 Errors, 0 Warnings</p>
        <button class="btn bgen">Generate HDL...</button>
        <button class="btn bfin">Finish</button>
        <span class="mark">CSDN @qwert_qqq</span>
      </footer>
    </div>`;
  }
}
